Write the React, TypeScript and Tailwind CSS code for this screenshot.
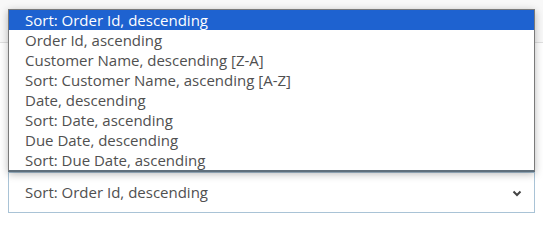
import React from 'react';

const options = [
  'Sort: Order Id, descending',
  'Order Id, ascending',
  'Customer Name, descending [Z-A]',
  'Sort: Customer Name, ascending [A-Z]',
  'Date, descending',
  'Sort: Date, ascending',
  'Due Date, descending',
  'Sort: Due Date, ascending',
];

const App = () => {
  return (
    <div
      className="relative w-[543px] h-[222px] bg-white overflow-hidden"
      style={{ fontFamily: '"Open Sans", sans-serif' }}
    >
      <div className="h-[43px] border-b border-[#e0e0e0] bg-[#f8f8f8]" />

      <div className="px-2 pt-[129px]">
        <div className="h-[41px] border border-[#a9c3d6] bg-white flex items-center justify-between pl-4 pr-3 text-[15px] text-[#505050]">
          <span>Sort: Order Id, descending</span>
          <svg width="10" height="7" viewBox="0 0 10 7" className="mt-[2px]">
            <path d="M1.5 1.5 L5 5 L8.5 1.5" fill="none" stroke="#444" strokeWidth="2" />
          </svg>
        </div>
      </div>

      <ul className="absolute left-2 top-[9px] w-[527px] border border-[#7a7a7a] border-b-[#5f6f7c] border-b-2 bg-white shadow-[0_2px_8px_rgba(0,0,0,0.28)] text-[15px] leading-[20px] text-[#505050]">
        {options.map((o, i) => (
          <li
            key={o}
            className={i === 0 ? 'pl-4 h-[20px] bg-[#1e62d0] text-white' : 'pl-4 h-[20px]'}
          >
            {o}
          </li>
        ))}
      </ul>
    </div>
  );
};

export default App;
